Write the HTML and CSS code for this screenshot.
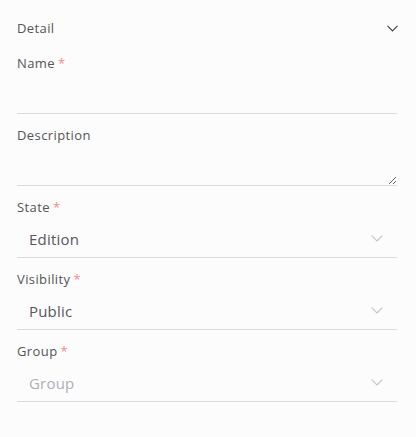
FILE: index.html
```html
<!DOCTYPE html>
<html>
<head>
<meta charset="utf-8">
<link rel="stylesheet" href="styles.css">
</head>
<body>
<div class="panel">
  <div class="header">
    <span class="title">Detail</span>
    <svg class="chev-dark" width="11" height="7" viewBox="0 0 11 7"><path d="M0.5 0.8 L5.5 5.8 L10.5 0.8" fill="none" stroke="#444" stroke-width="1.2"/></svg>
  </div>
  <div class="field first">
    <label class="label">Name<span class="req">*</span></label>
    <input class="input" type="text">
  </div>
  <div class="field">
    <label class="label">Description</label>
    <textarea class="textarea"></textarea>
  </div>
  <div class="field">
    <label class="label">State<span class="req">*</span></label>
    <div class="select"><span class="value">Edition</span><svg class="chev" width="12" height="7" viewBox="0 0 12 7"><path d="M0.6 0.6 L6 6 L11.4 0.6" fill="none" stroke="#c4c4c8" stroke-width="1.2"/></svg></div>
  </div>
  <div class="field">
    <label class="label">Visibility<span class="req">*</span></label>
    <div class="select"><span class="value">Public</span><svg class="chev" width="12" height="7" viewBox="0 0 12 7"><path d="M0.6 0.6 L6 6 L11.4 0.6" fill="none" stroke="#c4c4c8" stroke-width="1.2"/></svg></div>
  </div>
  <div class="field">
    <label class="label">Group<span class="req">*</span></label>
    <div class="select"><span class="value placeholder">Group</span><svg class="chev" width="12" height="7" viewBox="0 0 12 7"><path d="M0.6 0.6 L6 6 L11.4 0.6" fill="none" stroke="#c4c4c8" stroke-width="1.2"/></svg></div>
  </div>
</div>
</body>
</html>
```
FILE: styles.css
```css
html, body {
  margin: 0;
  padding: 0;
  background: #fcfcfc;
}
body {
  font-family: "Open Sans", "DejaVu Sans", sans-serif;
  color: #555558;
}
.panel {
  width: 380px;
  margin-left: 17px;
}
.header {
  display: flex;
  justify-content: space-between;
  align-items: center;
  height: 18px;
  padding: 19px 0 17px 0;
}
.title {
  font-size: 13px;
  line-height: 18px;
  letter-spacing: 0.4px;
}
.chev-dark {
  display: block;
  margin-right: -1px;
}
.field {
  display: flex;
  flex-direction: column;
  margin-top: 12px;
}
.field.first {
  margin-top: 0;
}
.label {
  font-size: 13px;
  line-height: 18px;
  height: 18px;
  letter-spacing: 0.4px;
}
.req {
  color: #f28b8b;
  margin-left: 3px;
}
.input {
  box-sizing: border-box;
  height: 42px;
  border: none;
  border-bottom: 1px solid #dcdcdf;
  background: transparent;
  outline: none;
  padding: 0;
  font: inherit;
}
.textarea {
  box-sizing: border-box;
  display: block;
  height: 42px;
  border: none;
  border-bottom: 1px solid #dcdcdf;
  background: transparent;
  outline: none;
  padding: 0;
  margin: 0;
  font: inherit;
  resize: vertical;
}
.select {
  box-sizing: border-box;
  height: 42px;
  border-bottom: 1px solid #dcdcdf;
  display: flex;
  align-items: center;
  justify-content: space-between;
  padding: 4px 14px 0 12px;
}
.value {
  font-size: 15px;
  line-height: 20px;
  letter-spacing: 0.2px;
  color: #58585c;
}
.value.placeholder {
  color: #aeb0b8;
}
.chev {
  display: block;
}
```
